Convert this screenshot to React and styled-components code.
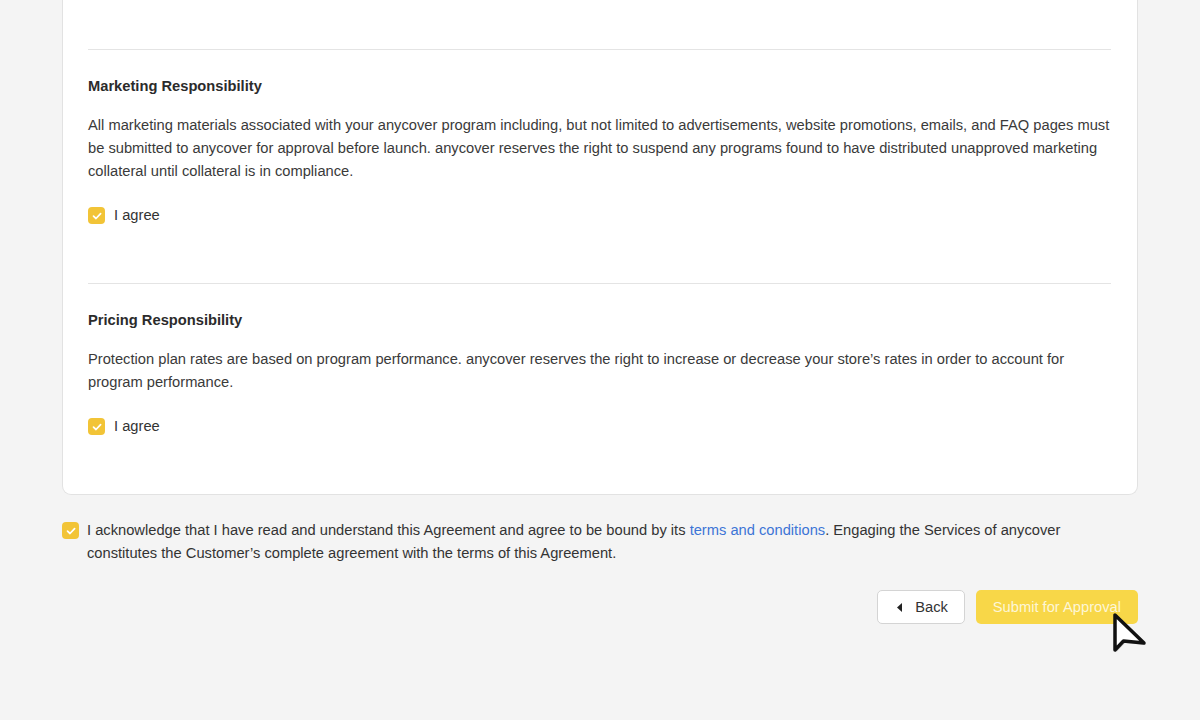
import React from "react";
import styled, { createGlobalStyle } from "styled-components";

const GlobalStyle = createGlobalStyle`
  html, body {
    margin: 0;
    padding: 0;
    background: #f4f4f4;
    font-family: "Liberation Sans", Arial, sans-serif;
    color: #333;
  }
`;

const sections = [
  {
    title: "Marketing Responsibility",
    text: "All marketing materials associated with your anycover program including, but not limited to advertisements, website promotions, emails, and FAQ pages must be submitted to anycover for approval before launch. anycover reserves the right to suspend any programs found to have distributed unapproved marketing collateral until collateral is in compliance.",
  },
  {
    title: "Pricing Responsibility",
    text: "Protection plan rates are based on program performance. anycover reserves the right to increase or decrease your store’s rates in order to account for program performance.",
  },
];

function Check() {
  return (
    <Box>
      <svg width="10" height="8" viewBox="0 0 10 8">
        <path d="M1.5 4.2 L4 6.5 L8.6 1.6" fill="none" stroke="#fff" strokeWidth="1.7" strokeLinecap="round" strokeLinejoin="round" />
      </svg>
    </Box>
  );
}

export default function App() {
  return (
    <>
      <GlobalStyle />
      <Page>
        <Card>
          {sections.map((s) => (
            <Section key={s.title}>
              <Heading>{s.title}</Heading>
              <Paragraph>{s.text}</Paragraph>
              <Agree>
                <Check />
                <span>I agree</span>
              </Agree>
            </Section>
          ))}
        </Card>
        <Acknowledge>
          <Check />
          <p>
            I acknowledge that I have read and understand this Agreement and agree to be bound by its{" "}
            <a href="#">terms and conditions</a>. Engaging the Services of anycover constitutes the Customer’s
            complete agreement with the terms of this Agreement.
          </p>
        </Acknowledge>
        <Actions>
          <BackButton>
            <svg width="5" height="9" viewBox="0 0 5 9">
              <path d="M5 0 L0 4.5 L5 9 Z" fill="#222" />
            </svg>
            Back
          </BackButton>
          <SubmitButton>
            Submit for Approval
            <Cursor width="38" height="46" viewBox="0 0 38 46">
              <path
                d="M4 4 L4 39 L12.5 30 L33 32 Z"
                fill="rgba(0,0,0,0.18)"
                transform="translate(1.5 2)"
              />
              <path
                d="M4 4 L4 39 L12.5 30 L33 32 Z"
                fill="#fff"
                stroke="#111"
                strokeWidth="3.5"
                strokeLinejoin="round"
              />
            </Cursor>
          </SubmitButton>
        </Actions>
      </Page>
    </>
  );
}

const Page = styled.div`
  width: 1076px;
  margin: 0 auto;
  padding-bottom: 96px;
`;

const Card = styled.div`
  background: #fff;
  border: 1px solid #e2e2e2;
  border-top: none;
  border-radius: 0 0 9px 9px;
  padding: 49px 26px 0 25px;
`;

const Section = styled.section`
  border-top: 1px solid #e4e4e4;
  padding: 25px 0 56px;
`;

const Heading = styled.h3`
  margin: 0;
  font-size: 14.7px;
  line-height: 23px;
  font-weight: 700;
  color: #2b2b2b;
`;

const Paragraph = styled.p`
  margin: 16px 0 21px;
  font-size: 14.7px;
  line-height: 23px;
  color: #3a3a3a;
`;

const Agree = styled.label`
  display: flex;
  align-items: center;
  gap: 9px;
  font-size: 14.7px;
  line-height: 23px;
  color: #333;
`;

const Box = styled.span`
  flex: none;
  width: 17px;
  height: 17px;
  border-radius: 4px;
  background: #f2c437;
  display: flex;
  align-items: center;
  justify-content: center;
`;

const Acknowledge = styled.div`
  display: flex;
  align-items: flex-start;
  gap: 8px;
  margin-top: 24px;
  padding-right: 40px;

  ${Box} {
    margin-top: 3px;
  }

  p {
    margin: 0;
    font-size: 14.7px;
    line-height: 23px;
    color: #333;
  }

  a {
    color: #3d75d6;
    text-decoration: none;
  }
`;

const Actions = styled.div`
  display: flex;
  justify-content: flex-end;
  gap: 11px;
  margin-top: 25px;
`;

const Button = styled.button`
  height: 34px;
  border-radius: 5px;
  font-family: "Liberation Sans", Arial, sans-serif;
  font-size: 14.7px;
  display: flex;
  align-items: center;
  cursor: pointer;
`;

const BackButton = styled(Button)`
  background: #fff;
  border: 1px solid #d4d4d4;
  color: #333;
  padding: 0 16px 0 19px;
  gap: 13px;
`;

const SubmitButton = styled(Button)`
  position: relative;
  background: #f8d748;
  border: none;
  color: #fdf6d6;
  padding: 0 17px;
`;

const Cursor = styled.svg`
  position: absolute;
  left: 135px;
  top: 21px;
`;
